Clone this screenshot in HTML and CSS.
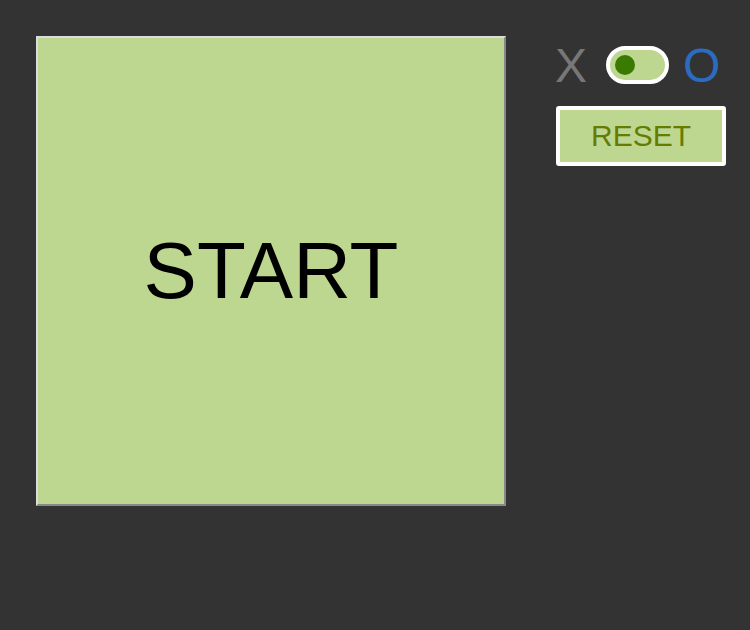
FILE: index.html
```html
<!DOCTYPE html>
<html>
<head>
<meta charset="utf-8">
<link rel="stylesheet" href="styles.css">
</head>
<body>
<div class="app">
  <div class="board">
    <div class="start">START</div>
  </div>
  <div class="side">
    <div class="players">
      <span class="player player-x">X</span>
      <div class="toggle"><span class="knob"></span></div>
      <span class="player player-o">O</span>
    </div>
    <button class="reset">RESET</button>
  </div>
</div>
</body>
</html>
```
FILE: styles.css
```css
html, body {
  margin: 0;
  padding: 0;
  background: #333333;
  font-family: "Liberation Sans", Arial, sans-serif;
}
.app {
  display: flex;
  align-items: flex-start;
  padding: 36px;
  gap: 50px;
}
.board {
  flex-shrink: 0;
  width: 466px;
  height: 466px;
  background: #bdd791;
  border: 2px solid;
  border-color: #dcdcdc #888888 #888888 #dcdcdc;
  display: flex;
  align-items: center;
  justify-content: center;
}
.start {
  font-size: 80px;
  color: #000;
  line-height: 1;
}
.side {
  flex-shrink: 0;
  display: flex;
  flex-direction: column;
  gap: 22px;
  width: 170px;
}
.players {
  display: flex;
  align-items: center;
  height: 38px;
  margin-top: 10px;
}
.player {
  font-size: 48px;
  line-height: 38px;
}
.player-x {
  color: #777777;
  margin-left: -1px;
  margin-top: 2px;
}
.player-o {
  color: #2b6cc0;
  margin-left: 14px;
  margin-top: 1px;
}
.toggle {
  box-sizing: border-box;
  width: 63px;
  height: 38px;
  border: 4px solid #ffffff;
  border-radius: 19px;
  background: #bdd791;
  display: flex;
  align-items: center;
  padding-left: 5px;
  margin-left: 19px;
}
.knob {
  width: 20px;
  height: 20px;
  border-radius: 50%;
  background: #3a7a00;
}
.reset {
  box-sizing: border-box;
  width: 170px;
  height: 60px;
  border: 4px solid #ffffff;
  border-radius: 3px;
  background: #bdd791;
  color: #667c00;
  font-family: "Liberation Sans", Arial, sans-serif;
  font-size: 30px;
  padding: 0;
}
```
